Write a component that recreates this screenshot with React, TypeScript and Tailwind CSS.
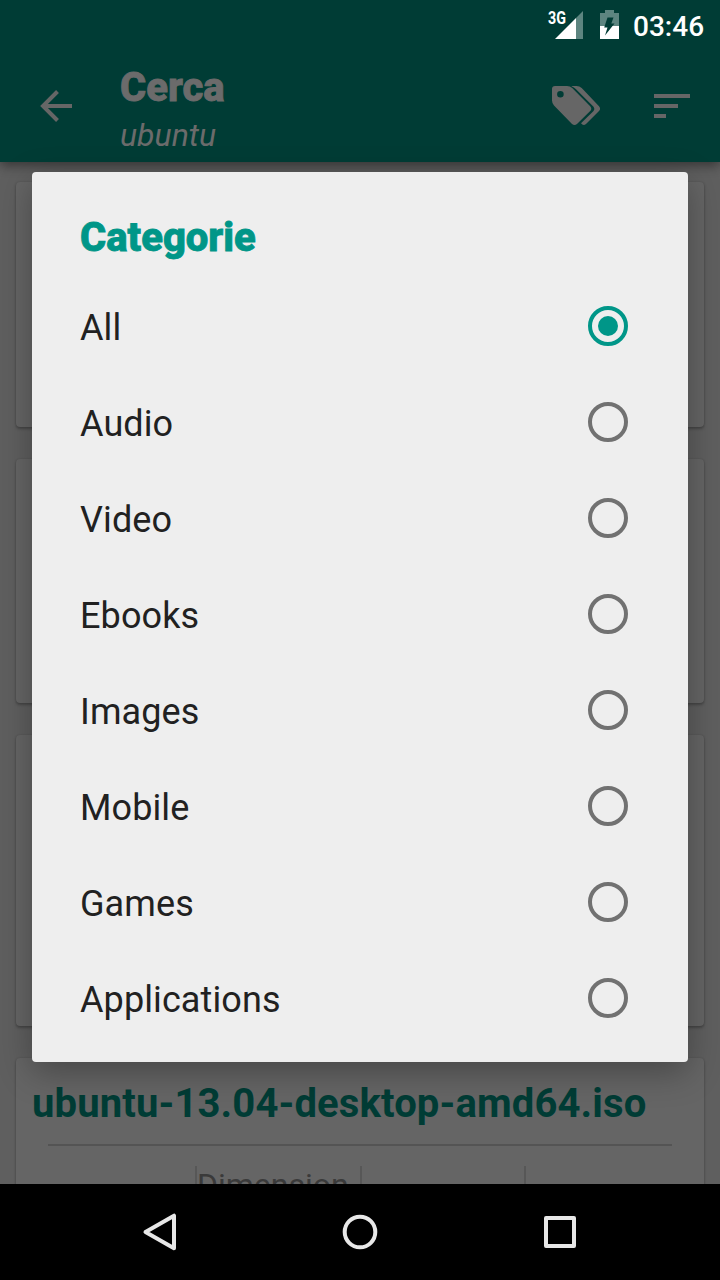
const categories = ["All", "Audio", "Video", "Ebooks", "Images", "Mobile", "Games", "Applications"];

function StatusBar() {
  return (
    <div className="flex h-12 shrink-0 items-start text-white">
      <svg className="ml-[540px] h-12 w-[86px] shrink-0" viewBox="540 0 86 48">
        <path d="M583 11V39H576V18Z" fill="#5d8580" />
        <path d="M576 18V39H555Z" fill="#fff" />
        <path d="M600 13H605V10H614V13H619V26H600Z" fill="#5d8580" />
        <path d="M600 26H619V39H600Z" fill="#fff" />
        <path d="M607.5 17.5H613.5L611.3 23.5H614.5L605 35.5L607.5 27.5H604.2Z" fill="#003c35" />
        <text x="548" y="24" fill="#fff" className="font-[Roboto] text-[17.5px] font-bold" textLength="18" lengthAdjust="spacingAndGlyphs">3G</text>
      </svg>
      <span className="ml-[7px] mt-[10px] text-[28px] leading-[34px] font-medium">03:46</span>
    </div>
  );
}

function Toolbar() {
  return (
    <div className="flex h-[114px] text-[#6b6b6b]">
      <svg className="mt-10 ml-8 h-9 w-12 shrink-0" viewBox="32 88 48 36" fill="none" stroke="#666" strokeWidth="4">
        <path d="M72 106H43M57.5 91.5L43 106L57.5 120.5" />
      </svg>
      <div className="ml-10 flex w-[420px] flex-col pt-4">
        <h1 className="text-[40px] leading-[47px] font-extrabold [-webkit-text-stroke:0.9px_currentColor]">Cerca</h1>
        <p className="mt-[5px] text-[32px] leading-[38px] italic">ubuntu</p>
      </div>
      <svg className="mt-8 ml-2 h-12 w-[56px] shrink-0" viewBox="548 80 56 48">
        <path
          fill="#666"
          fillRule="evenodd"
          d="M555 86H567Q570 86 572.2 88L590.2 106.2Q592.4 108.7 590.2 111L577 124Q574.5 126 572 124L554 105.5Q552 103.3 552 100.5V89Q552 86 555 86ZM563.7 94.3A3.3 3.3 0 1 0 557.1 94.3A3.3 3.3 0 1 0 563.7 94.3Z"
        />
        <path
          fill="#666"
          d="M572 86H576.5Q579.5 86 581.7 88L599 106.2Q601.2 108.7 599 111L586 124Q584 125.6 582.3 124.5L581 123.2L593.3 111.3Q595.3 109 593.3 106.6L576 89.2Q574 87 571.5 86.2Z"
        />
      </svg>
      <svg className="mt-8 ml-11 h-12 w-12 shrink-0" viewBox="648 80 48 48" fill="#666">
        <path d="M654 94H690V98H654ZM654 104H678V108H654ZM654 114H666V118H654Z" />
      </svg>
    </div>
  );
}

const cardClass = "mx-4 shrink-0 rounded-[4px] bg-[#656565] shadow-[0_2px_3px_rgba(0,0,0,0.26),0_0_2px_rgba(0,0,0,0.15)]";

function Results() {
  return (
    <main className="flex h-[1022px] flex-col gap-8 overflow-hidden bg-[#5f5f5f] pt-5">
      <div className={`${cardClass} h-[245px]`} />
      <div className={`${cardClass} h-[244px]`} />
      <div className={`${cardClass} h-[291px]`} />
      <div className={`${cardClass} h-[200px] px-4 pt-[22px]`}>
        <h2 className="text-[40px] leading-[47px] font-bold tracking-[0.14px] whitespace-nowrap text-[#003c35]">ubuntu-13.04-desktop-amd64.iso</h2>
        <div className="mx-4 mt-[17px] h-0.5 bg-[#545454]" />
        <div className="mt-5 grid h-20 grid-cols-4 text-[32px] leading-[38px] text-[#3a3a3a]">
          <div />
          <div className="-ml-px border-l-2 border-[#575757]">Dimension</div>
          <div className="border-l-2 border-[#575757]" />
          <div className="border-l-2 border-[#575757]" />
        </div>
      </div>
    </main>
  );
}

function Radio({ checked }: { checked: boolean }) {
  return (
    <span className={`flex size-10 items-center justify-center rounded-full border-4 ${checked ? "border-[#009688]" : "border-[#717171]"}`}>
      {checked && <span className="size-5 rounded-full bg-[#009688]" />}
    </span>
  );
}

function CategoryDialog() {
  return (
    <div
      role="dialog"
      className="absolute top-[172px] left-8 h-[890px] w-[656px] rounded-[4px] bg-[#eeeeee] shadow-[0_10px_34px_rgba(0,0,0,0.3)]"
    >
      <h2 className="h-[106px] pt-[42px] pl-12 text-[40px] leading-[47px] font-extrabold text-[#009688] [-webkit-text-stroke:0.9px_currentColor]">
        Categorie
      </h2>
      <ul>
        {categories.map((name, index) => (
          <li key={name} className="flex h-24 items-center justify-between pr-[60px] pl-12 text-[36px] leading-[42px] text-[#212121]">
            <span className="pt-[3px] tracking-[0.1px]">{name}</span>
            <Radio checked={index === 0} />
          </li>
        ))}
      </ul>
    </div>
  );
}

function NavigationBar() {
  return (
    <nav className="relative flex h-24 items-center justify-center gap-[152px] bg-black">
      <svg className="size-12" viewBox="0 0 48 48" fill="none" stroke="#e8e8e8" strokeWidth="4" strokeLinejoin="round">
        <path d="M38 7.7V40.3L9.5 24Z" />
      </svg>
      <svg className="size-12" viewBox="0 0 48 48" fill="none" stroke="#e8e8e8" strokeWidth="4">
        <circle cx="24" cy="24" r="15.3" />
      </svg>
      <svg className="size-12" viewBox="0 0 48 48" fill="none" stroke="#e8e8e8" strokeWidth="4" strokeLinejoin="round">
        <path d="M10 10H38V38H10Z" />
      </svg>
    </nav>
  );
}

export default function App() {
  return (
    <div className="relative h-[1280px] w-[720px] overflow-hidden font-[Roboto,sans-serif]">
      <header className="relative h-[162px] bg-[#003c35] shadow-[0_4px_10px_rgba(0,0,0,0.4)]">
        <StatusBar />
        <Toolbar />
      </header>
      <Results />
      <CategoryDialog />
      <NavigationBar />
    </div>
  );
}
